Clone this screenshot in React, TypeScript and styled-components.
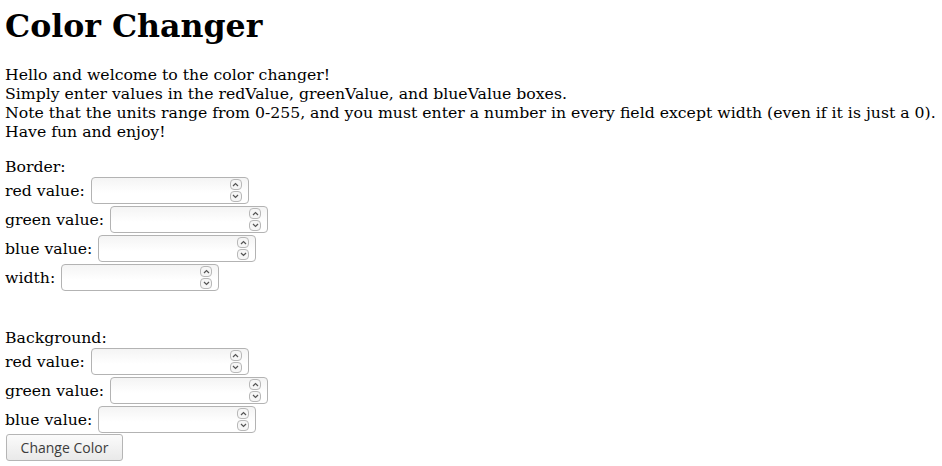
import React from "react";
import styled, { createGlobalStyle } from "styled-components";

const GlobalStyle = createGlobalStyle`
  body {
    margin: 0 0 0 5px;
    background: #ffffff;
    color: #000000;
    font-family: "DejaVu Serif", serif;
    font-size: 15.7px;
  }
`;

const Title = styled.h1`
  margin: 7px 0 21px;
  font-size: 31.6px;
  font-weight: 700;
  line-height: 37px;
`;

const Intro = styled.p`
  margin: 0 0 16px;
  line-height: 19px;
  white-space: nowrap;
`;

const Section = styled.div<{ $gap?: number }>`
  display: flex;
  flex-direction: column;
  margin-top: ${(p) => p.$gap ?? 0}px;
`;

const Heading = styled.div`
  line-height: 19px;
`;

const Row = styled.div`
  display: flex;
  align-items: center;
  gap: 6px;
  height: 29px;
`;

const ButtonRow = styled.div`
  display: flex;
`;

const Field = styled.div`
  position: relative;
  width: 158px;
  height: 27px;
  box-sizing: border-box;
  border: 1px solid #b3b3b3;
  border-radius: 4px;
  background: linear-gradient(#f4f4f4, #ffffff 60%);
`;

const Input = styled.input`
  width: 100%;
  height: 100%;
  box-sizing: border-box;
  border: none;
  background: transparent;
  outline: none;
  padding: 0 24px 0 4px;
  font: inherit;
`;

const Spinner = styled.div`
  position: absolute;
  right: 6px;
  top: 1px;
  display: flex;
  flex-direction: column;
  gap: 1px;
`;

const SpinButton = styled.div`
  width: 12px;
  height: 11px;
  box-sizing: border-box;
  border: 1px solid #b8b8b8;
  border-radius: 4px;
  background: #f6f6f6;
  display: flex;
  align-items: center;
  justify-content: center;
`;

const Button = styled.button`
  width: 117px;
  height: 27px;
  margin-left: 1px;
  padding: 0;
  border: 1px solid #b5b5b5;
  border-radius: 3px;
  background: linear-gradient(#fbfbfb, #e9e9e9);
  color: #3c3c3c;
  font-family: "Open Sans", "DejaVu Sans", sans-serif;
  font-size: 14px;
`;

const Chevron = ({ up }: { up?: boolean }) => (
  <svg width="7" height="5" viewBox="0 0 7 5">
    <path
      d={up ? "M1 4L3.5 1.5L6 4" : "M1 1L3.5 3.5L6 1"}
      fill="none"
      stroke="#555"
      strokeWidth="1.2"
    />
  </svg>
);

const NumberField = ({ label }: { label: string }) => (
  <Row>
    <span>{label}</span>
    <Field>
      <Input type="text" />
      <Spinner>
        <SpinButton>
          <Chevron up />
        </SpinButton>
        <SpinButton>
          <Chevron />
        </SpinButton>
      </Spinner>
    </Field>
  </Row>
);

export default function App() {
  return (
    <>
      <GlobalStyle />
      <Title>Color Changer</Title>
      <Intro>
        Hello and welcome to the color changer!
        <br />
        Simply enter values in the redValue, greenValue, and blueValue boxes.
        <br />
        Note that the units range from 0-255, and you must enter a number in
        every field except width (even if it is just a 0).
        <br />
        Have fun and enjoy!
      </Intro>
      <Section>
        <Heading>Border:</Heading>
        <NumberField label="red value:" />
        <NumberField label="green value:" />
        <NumberField label="blue value:" />
        <NumberField label="width:" />
      </Section>
      <Section $gap={36}>
        <Heading>Background:</Heading>
        <NumberField label="red value:" />
        <NumberField label="green value:" />
        <NumberField label="blue value:" />
        <ButtonRow>
          <Button>Change Color</Button>
        </ButtonRow>
      </Section>
    </>
  );
}
